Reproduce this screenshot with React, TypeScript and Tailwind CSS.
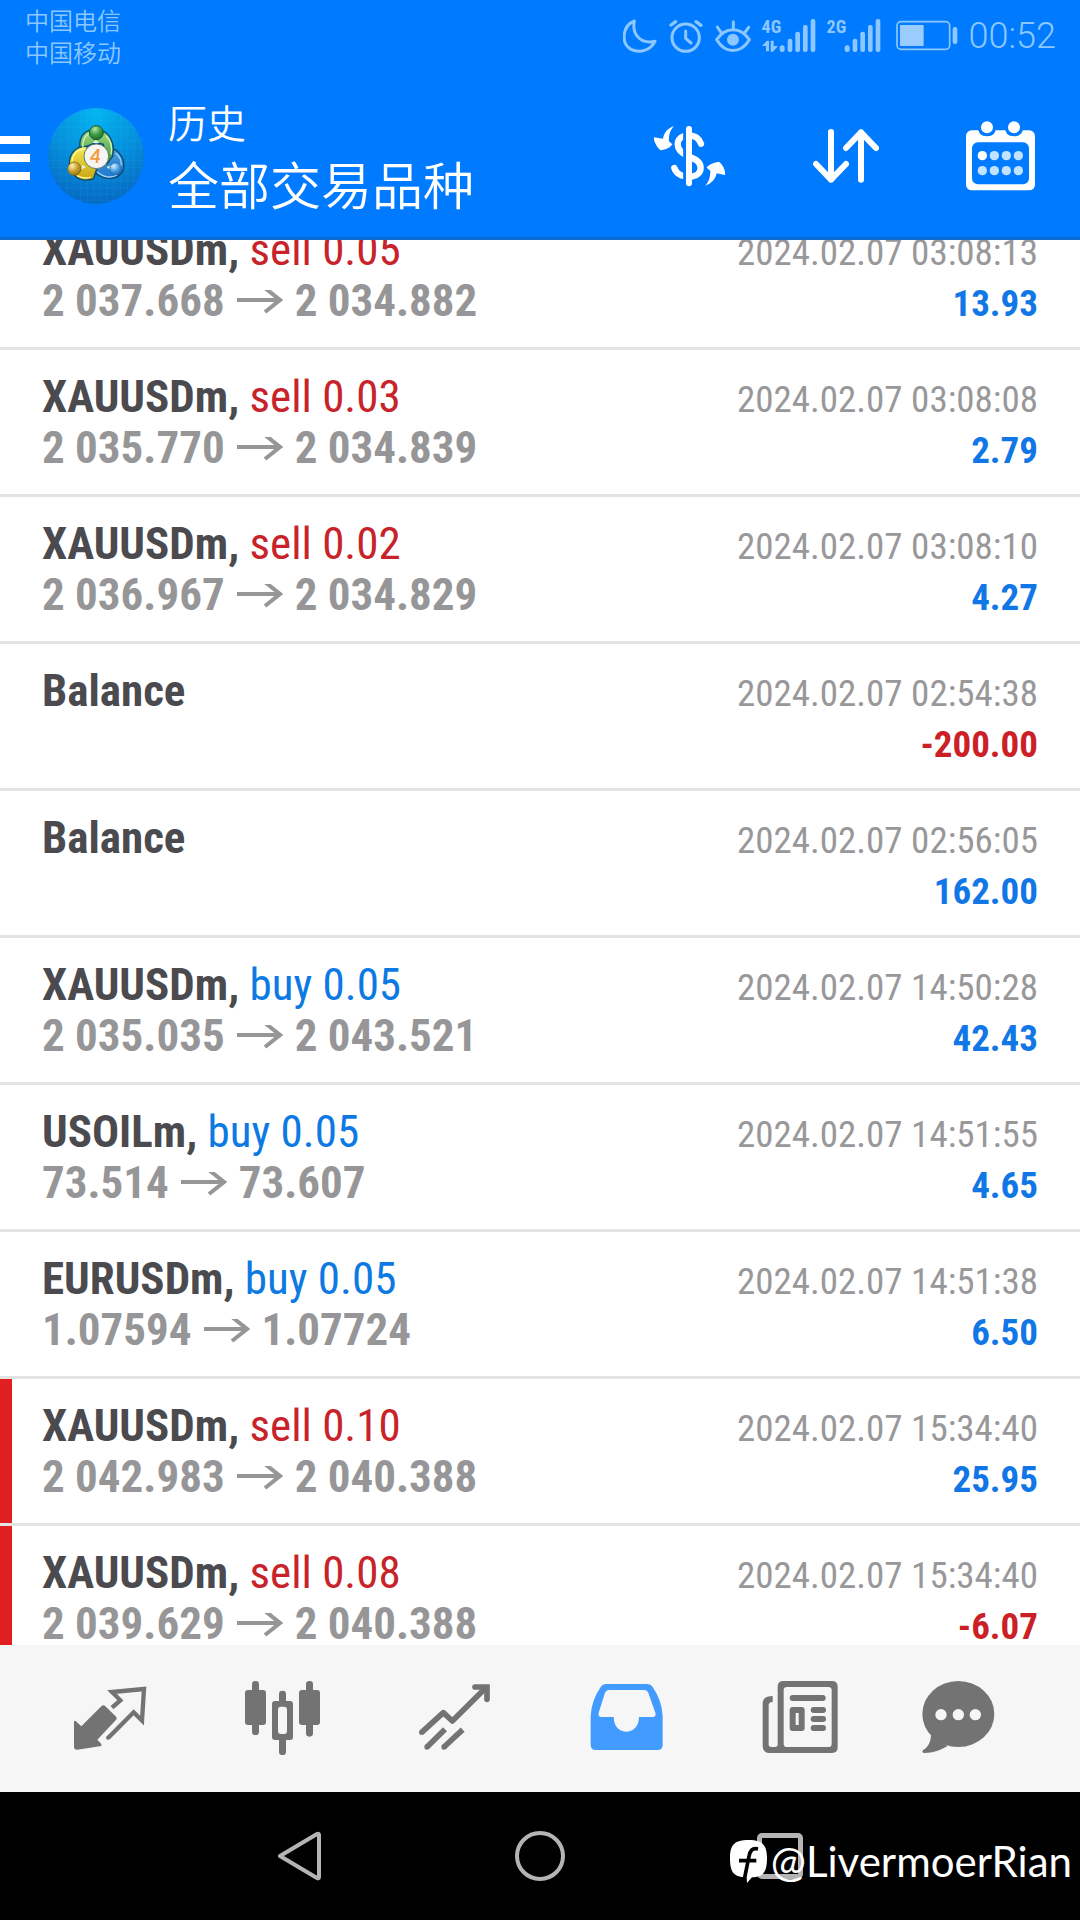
import type { ReactNode } from "react";
import clsx from "clsx";

type Deal = {
  symbol: string;
  side?: "sell" | "buy";
  volume?: string;
  open?: string;
  close?: string;
  time: string;
  profit: string;
  marked?: boolean;
};

const deals: Deal[] = [
  { symbol: "XAUUSDm", side: "sell", volume: "0.05", open: "2 037.668", close: "2 034.882", time: "2024.02.07 03:08:13", profit: "13.93" },
  { symbol: "XAUUSDm", side: "sell", volume: "0.03", open: "2 035.770", close: "2 034.839", time: "2024.02.07 03:08:08", profit: "2.79" },
  { symbol: "XAUUSDm", side: "sell", volume: "0.02", open: "2 036.967", close: "2 034.829", time: "2024.02.07 03:08:10", profit: "4.27" },
  { symbol: "Balance", time: "2024.02.07 02:54:38", profit: "-200.00" },
  { symbol: "Balance", time: "2024.02.07 02:56:05", profit: "162.00" },
  { symbol: "XAUUSDm", side: "buy", volume: "0.05", open: "2 035.035", close: "2 043.521", time: "2024.02.07 14:50:28", profit: "42.43" },
  { symbol: "USOILm", side: "buy", volume: "0.05", open: "73.514", close: "73.607", time: "2024.02.07 14:51:55", profit: "4.65" },
  { symbol: "EURUSDm", side: "buy", volume: "0.05", open: "1.07594", close: "1.07724", time: "2024.02.07 14:51:38", profit: "6.50" },
  { symbol: "XAUUSDm", side: "sell", volume: "0.10", open: "2 042.983", close: "2 040.388", time: "2024.02.07 15:34:40", profit: "25.95", marked: true },
  { symbol: "XAUUSDm", side: "sell", volume: "0.08", open: "2 039.629", close: "2 040.388", time: "2024.02.07 15:34:40", profit: "-6.07", marked: true }
];

function Signal({ label, data = false }: { label: string; data?: boolean }) {
  return (
    <div className="relative h-9 w-[54px]">
      <span className="absolute top-0 left-0 font-['Roboto_Condensed','Roboto',sans-serif] text-[18px] leading-[18px] font-bold">
        {label}
      </span>
      <svg className="block h-9 w-[54px]" viewBox="485 54 162 108" fill="currentColor">
        <rect x="538" y="136" width="15" height="20" rx="7" />
        <rect x="562" y="116" width="14" height="40" rx="6" />
        <rect x="585" y="95" width="14" height="61" rx="6" />
        <rect x="608" y="75" width="14" height="81" rx="6" />
        <rect x="631" y="57" width="14" height="99" rx="6" />
        {data && <path d="M485 138 L500 122 H506 V154 H497 V138Z M511 122 H520 V138 H533 L518 155 H511Z" />}
      </svg>
    </div>
  );
}

function StatusBar() {
  return (
    <div className="flex h-[72px] justify-between pr-6 pl-[25px] text-[#8cc8ff]">
      <div className="pt-1 text-[24px] leading-[32px] font-[350]">
        <p>中国电信</p>
        <p>中国移动</p>
      </div>
      <div className="flex h-[72px] items-center gap-[11px]">
        <svg className="h-9 w-[34px]" viewBox="70 55 102 108" fill="none" stroke="currentColor" strokeWidth="9" strokeLinejoin="round">
          <path d="M104 64 C66 80 64 132 94 149 C122 163 154 150 166 125 C124 134 96 106 104 64Z" />
        </svg>
        <svg className="h-9 w-9" viewBox="203 55 108 108" fill="none" stroke="currentColor" strokeWidth="9" strokeLinecap="round">
          <circle cx="256" cy="114" r="41" />
          <path d="M256 94 V116 L272 130" strokeWidth="9" />
          <path d="M212 76 L226 66 M287 66 L302 77" strokeWidth="10" />
        </svg>
        <svg className="h-9 w-9" viewBox="341 55 108 108" fill="none" stroke="currentColor" strokeWidth="9" strokeLinecap="round">
          <path d="M346 120 C372 80 418 80 444 120 C418 163 372 163 346 120Z" strokeLinejoin="round" />
          <circle cx="395" cy="120" r="18" fill="currentColor" stroke="none" />
          <path d="M396 66 V84 M348 82 L359 98 M442 83 L431 98" />
        </svg>
        <Signal label="4G" data />
        <Signal label="2G" />
        <svg className="ml-1 h-8 w-[62px]" viewBox="886 63 186 96" fill="none" stroke="currentColor">
          <rect x="889" y="68" width="158" height="83" rx="12" strokeWidth="5" />
          <rect x="898" y="78" width="71" height="63" rx="2" fill="#9accff" stroke="none" />
          <rect x="1056" y="84" width="14" height="51" rx="6" fill="currentColor" stroke="none" />
        </svg>
        <span className="font-['Roboto',sans-serif] text-[36px] leading-[38px] font-light">00:52</span>
      </div>
    </div>
  );
}

function AccountLogo() {
  return (
    <svg className="size-24" viewBox="144 323 288 288">
      <defs>
        <radialGradient id="sea" cx="0.5" cy="0.05" r="0.95">
          <stop offset="0" stopColor="#04b4f2" />
          <stop offset="0.5" stopColor="#0590dc" />
          <stop offset="1" stopColor="#0668c2" />
        </radialGradient>
        <linearGradient id="green" x1="0" y1="0" x2="0" y2="1">
          <stop offset="0" stopColor="#a5dc88" />
          <stop offset="1" stopColor="#2f9434" />
        </linearGradient>
        <linearGradient id="yellow" x1="0" y1="0" x2="0" y2="1">
          <stop offset="0" stopColor="#f4ea52" />
          <stop offset="1" stopColor="#c8a312" />
        </linearGradient>
        <linearGradient id="blue" x1="0" y1="0" x2="0" y2="1">
          <stop offset="0" stopColor="#4d9ede" />
          <stop offset="1" stopColor="#1c78cc" />
        </linearGradient>
        <radialGradient id="greenBall" cx="0.4" cy="0.25" r="0.8">
          <stop offset="0" stopColor="#b8e8a0" />
          <stop offset="0.5" stopColor="#3f9c48" />
          <stop offset="1" stopColor="#1a6c2c" />
        </radialGradient>
        <radialGradient id="yellowBall" cx="0.35" cy="0.3" r="0.8">
          <stop offset="0" stopColor="#fff3b0" />
          <stop offset="0.5" stopColor="#c9a234" />
          <stop offset="1" stopColor="#8f6c10" />
        </radialGradient>
        <radialGradient id="blueBall" cx="0.35" cy="0.3" r="0.8">
          <stop offset="0" stopColor="#d8f0ff" />
          <stop offset="0.5" stopColor="#4c9fe0" />
          <stop offset="1" stopColor="#1460ac" />
        </radialGradient>
        <pattern id="mesh" x="0" y="0" width="20" height="20" patternUnits="userSpaceOnUse">
          <path d="M0 0H20M0 0V20" stroke="#2cc0f4" strokeWidth="2" opacity="0.3" />
        </pattern>
      </defs>
      <circle cx="288" cy="467" r="144" fill="url(#sea)" />
      <circle cx="288" cy="467" r="144" fill="url(#mesh)" />
      <g stroke="#0d4a6c" strokeWidth="4">
        <path d="M336 444 C362 452 376 482 370 508 C358 540 304 546 272 504 L322 488Z" fill="url(#blue)" />
        <path d="M240 446 C234 404 260 386 290 388 C326 390 346 424 338 468 L322 490 L310 432 L288 426Z" fill="url(#green)" />
        <path d="M262 438 C226 436 206 462 208 496 C216 532 244 546 280 536 L290 506 L256 478Z" fill="url(#yellow)" />
      </g>
      <path d="M249 442 C246 412 262 398 280 396 M333 462 C338 440 332 420 318 406" fill="none" stroke="#d2f2ba" strokeWidth="4" />
      <path d="M216 484 C218 460 234 446 256 446 M232 526 C246 534 262 534 272 530" fill="none" stroke="#fff9a0" strokeWidth="4" />
      <path d="M346 458 C362 470 366 486 362 500 M292 514 C310 532 336 534 350 524" fill="none" stroke="#9cd4fa" strokeWidth="4" />
      <path d="M278 428 L288 418 L298 428Z M246 494 L244 508 L258 500Z M320 500 L334 494 L330 508Z" fill="#e8f4e0" />
      <circle cx="289" cy="397" r="21" fill="url(#greenBall)" stroke="#175c30" strokeWidth="3" />
      <circle cx="223" cy="505" r="20" fill="url(#yellowBall)" stroke="#7c6010" strokeWidth="2" />
      <circle cx="347" cy="505" r="18" fill="url(#blueBall)" stroke="#1a64a8" strokeWidth="2" />
      <circle cx="289" cy="468" r="37" fill="#f7f5f2" stroke="#5a7a6c" strokeWidth="3" />
      <text x="286" y="489" textAnchor="middle" fontFamily="Lato, sans-serif" fontSize="58" fontWeight="700" fontStyle="italic" fill="#f39a3c">
        4
      </text>
    </svg>
  );
}

function AppBar() {
  return (
    <div className="flex h-[165px] items-center pt-0.5 pr-[45px] text-white">
      <button type="button" aria-label="Menu" className="mt-1 flex w-[30px] flex-col gap-[10px]">
        <span className="h-2 bg-white" />
        <span className="h-2 bg-white" />
        <span className="h-2 bg-white" />
      </button>
      <div className="ml-[18px]">
        <AccountLogo />
      </div>
      <div className="ml-6 grow pb-2 font-[350]">
        <h1 className="text-[39px] leading-[62px]">历史</h1>
        <p className="text-[51px] leading-[62px]">全部交易品种</p>
      </div>
      <div className="flex items-center gap-[87px]">
        <button type="button" aria-label="Filter by symbol">
          <svg className="h-[70px] w-[73px]" viewBox="71 63 219 210" fill="none" stroke="currentColor" strokeLinecap="round">
            <path
              d="M215 131 C208 112 194 106 178 106 C156 106 145 119 145 133 C145 152 160 162 179 170 C204 178 214 188 214 203 C214 221 198 230 179 230 C157 230 141 221 135 204"
              strokeWidth="19"
            />
            <path d="M166 88 V250" stroke="#007aff" strokeWidth="9" />
            <path d="M179 87 V250" strokeWidth="18" />
            <path d="M134 78 C114 86 104 98 101 116 L74 112 C72 122 82 142 94 151 C108 150 124 142 129 133 L119 124 C118 104 123 90 134 78Z" fill="currentColor" stroke="none" />
            <path d="M227 258 C247 250 258 238 262 220 L287 225 C290 212 280 194 270 186 C256 186 238 194 232 203 L243 212 C243 232 238 246 227 258Z" fill="currentColor" stroke="none" />
          </svg>
        </button>
        <button type="button" aria-label="Sort">
          <svg className="h-[54px] w-[66px]" viewBox="549 87 198 162" fill="none" stroke="currentColor" strokeWidth="18" strokeLinecap="round" strokeLinejoin="round">
            <path d="M603 96 V239 M558 192 L603 239 L648 192" />
            <path d="M693 239 V97 M648 144 L693 97 L738 144" />
          </svg>
        </button>
        <button type="button" aria-label="Period">
          <svg className="h-[70px] w-[69px]" viewBox="1008 59 207 210">
            <rect x="1008" y="87" width="207" height="180" rx="17" fill="currentColor" />
            <rect x="1026" y="123" width="171" height="126" rx="18" fill="#007aff" />
            <path d="M1044 78 H1098 Q1098 105 1071 105 Q1044 105 1044 78Z M1125 78 H1179 Q1179 105 1152 105 Q1125 105 1125 78Z" fill="#007aff" />
            <circle cx="1071" cy="78" r="18" fill="currentColor" />
            <circle cx="1152" cy="78" r="18" fill="currentColor" />
            <circle cx="1057" cy="163" r="14" fill="currentColor" />
            <g fill="#c2e3ff">
              <circle cx="1093" cy="163" r="14" />
              <circle cx="1129" cy="163" r="14" />
              <circle cx="1165" cy="163" r="14" />
              <circle cx="1057" cy="208" r="14" />
              <circle cx="1093" cy="208" r="14" />
              <circle cx="1129" cy="208" r="14" />
              <circle cx="1165" cy="208" r="14" />
            </g>
          </svg>
        </button>
      </div>
    </div>
  );
}

function DealRow({ deal }: { deal: Deal }) {
  return (
    <li
      className={clsx(
        "h-[147px] border-b-3 border-[#e3e3e3] px-[42px] pt-[21px] font-['Roboto_Condensed','Roboto',sans-serif] leading-[51px]",
        deal.marked && "bg-linear-to-r from-[#e02020] from-[12px] to-white to-[12px]"
      )}
    >
      <div className="flex h-[51px] items-baseline justify-between">
        <p className="text-[45px] font-bold text-[#4a4a4f]">
          {deal.symbol}
          {deal.side && (
            <>
              {", "}
              <span className={clsx("font-normal", deal.side === "sell" ? "text-[#c8232a]" : "text-[#0d79e2]")}>
                {deal.side} {deal.volume}
              </span>
            </>
          )}
        </p>
        <time className="text-[37px] text-[#98989a]">{deal.time}</time>
      </div>
      <div className="flex h-[51px] items-baseline justify-between font-bold">
        <p className="text-[45px] text-[#969698]">
          {deal.open ? (
            <>
              {deal.open}
              <svg className="mx-3 inline h-[26px] w-[46px] align-baseline" viewBox="0 0 46 26" fill="none" stroke="currentColor" strokeWidth="4">
                <path d="M0 10 H43 M28 -2 L43 10 L28 22" />
              </svg>
              {deal.close}
            </>
          ) : (
            "\u00a0"
          )}
        </p>
        <p className={clsx("text-[37px]", deal.profit.startsWith("-") ? "text-[#cc2027]" : "text-[#1277e6]")}>
          {deal.profit}
        </p>
      </div>
    </li>
  );
}

function Tab({ label, active = false, children }: { label: string; active?: boolean; children: ReactNode }) {
  return (
    <button
      type="button"
      aria-label={label}
      className={clsx("flex items-center justify-center", active ? "text-[#429bff]" : "text-[#737373]")}
    >
      {children}
    </button>
  );
}

function TabBar() {
  return (
    <nav className="grid h-[147px] grid-cols-[repeat(5,172fr)_148fr] bg-[#f6f6f6] pr-12 pl-6">
      <Tab label="Quotes">
        <svg className="size-[75px]" viewBox="99 123 225 225" fill="none" stroke="currentColor">
          <path d="M184 199 Q190 193 196 199 L227 229 Q233 235 227 241 L172 299 L184 312 V318 L112 329 Q102 330 102 320 V243 L107 243 L124 259Z" fill="currentColor" stroke="none" />
          <path d="M216 203 L241 181 L216 156 L312 147 L306 242 L281 217 L205 293" strokeWidth="13" />
          <circle cx="204" cy="293" r="6" fill="currentColor" stroke="none" />
        </svg>
      </Tab>
      <Tab label="Charts">
        <svg className="size-[75px]" viewBox="612 123 225 225" fill="currentColor">
          <rect x="633" y="123" width="21" height="162" rx="10" />
          <rect x="612" y="150" width="63" height="105" rx="9" />
          <rect x="795" y="123" width="21" height="167" rx="10" />
          <rect x="774" y="150" width="63" height="105" rx="9" />
          <rect x="714" y="152" width="21" height="193" rx="10" />
          <rect x="693" y="183" width="63" height="117" rx="9" />
          <rect x="711" y="200" width="27" height="82" rx="9" fill="#f6f6f6" />
        </svg>
      </Tab>
      <Tab label="Trade">
        <svg className="size-[75px]" viewBox="1128 123 225 225" fill="none" stroke="currentColor" strokeWidth="17">
          <path d="M1142 277 L1207 218 L1234 243 L1336 142" strokeLinejoin="round" />
          <path d="M1302 141 H1338 V178" strokeLinecap="round" />
          <path d="M1158 321 L1212 268 M1209 321 L1265 269" />
          <g fill="currentColor" stroke="none">
            <circle cx="1142" cy="277" r="8" />
            <circle cx="1158" cy="321" r="8" />
            <circle cx="1209" cy="321" r="8" />
          </g>
        </svg>
      </Tab>
      <Tab label="History" active>
        <svg className="size-[75px]" viewBox="88 123 225 225" fill="currentColor">
          <path
            fillRule="evenodd"
            d="M138 132 H262 Q273 132 279 141 Q307 182 309 228 V314 Q309 330 293 330 H109 Q93 330 93 314 V228 Q95 182 123 141 Q129 132 138 132Z M148 150 Q139 150 136 158 L117 218 Q114 231 126 231 H162 C162 290 238 290 238 231 H278 Q291 231 287 218 L266 158 Q263 150 254 150Z"
          />
        </svg>
      </Tab>
      <Tab label="News">
        <svg className="size-[75px]" viewBox="604 123 225 225" fill="currentColor" overflow="visible">
          <path
            fillRule="evenodd"
            d="M671 123 H817 Q834 123 834 140 V322 Q834 339 817 339 H631 Q609 339 609 317 V190 Q609 168 639 168 V186 Q627 186 627 196 V313 Q627 321 635 321 H646 Q654 321 654 313 V140 Q654 123 671 123Z M682 141 Q672 141 672 151 V311 Q672 321 682 321 H806 Q816 321 816 311 V151 Q816 141 806 141Z"
          />
          <rect x="690" y="165" width="108" height="18" rx="9" />
          <path fillRule="evenodd" d="M699 201 H726 Q735 201 735 210 V264 Q735 273 726 273 H699 Q690 273 690 264 V210 Q690 201 699 201Z M708 219 V255 H717 V219Z" />
          <rect x="753" y="201" width="46" height="18" rx="9" />
          <rect x="753" y="228" width="46" height="18" rx="9" />
          <rect x="753" y="255" width="46" height="18" rx="9" />
        </svg>
      </Tab>
      <Tab label="Messages">
        <svg className="size-[75px]" viewBox="1082 123 225 225" fill="currentColor">
          <ellipse cx="1194" cy="222" rx="108" ry="99" />
          <path d="M1112 284 C1112 304 1104 322 1088 330 Q1083 338 1092 339 C1120 339 1140 330 1162 318Z" />
          <circle cx="1142" cy="224" r="17" fill="#f6f6f6" />
          <circle cx="1194" cy="224" r="17" fill="#f6f6f6" />
          <circle cx="1245" cy="224" r="17" fill="#f6f6f6" />
        </svg>
      </Tab>
    </nav>
  );
}

function SystemNav() {
  return (
    <div className="relative grid h-32 grid-cols-3 bg-black px-[180px] text-[#b4b4b4]">
      <button type="button" aria-label="Back" className="flex items-center justify-center">
        <svg className="h-[50px] w-11" viewBox="0 0 44 50" fill="none" stroke="currentColor" strokeWidth="4" strokeLinejoin="round">
          <path d="M2 25 L39 3 Q41 2 41 4 V46 Q41 48 39 47Z" />
        </svg>
      </button>
      <button type="button" aria-label="Home" className="flex items-center justify-center">
        <span className="size-[50px] rounded-full border-4 border-current" />
      </button>
      <button type="button" aria-label="Recents" className="flex items-center justify-center">
        <span className="size-[46px] rounded-[5px] border-[5px] border-current" />
      </button>
      <div className="absolute top-[47px] right-2 flex items-center gap-1 text-white">
        <svg className="h-[43px] w-[37px]" viewBox="94 155 111 129">
          <path d="M150 155 C190 155 205 168 205 210 C205 254 192 266 160 267 L145 284 L144 267 C106 266 94 254 94 210 C94 168 108 155 150 155Z" fill="currentColor" />
          <path d="M178 182 C160 178 154 188 151 204 L138 268 M121 217 H173" fill="none" stroke="#000" strokeWidth="11" />
        </svg>
        <span className="font-['Lato',sans-serif] text-[42px] leading-[44px]">@LivermoerRian</span>
      </div>
    </div>
  );
}

export default function App() {
  return (
    <div className="flex h-screen flex-col overflow-hidden bg-white font-['Noto_Sans_CJK_SC',sans-serif]">
      <header className="shrink-0 border-b-3 border-[#0a6bd4] bg-[#007aff]">
        <StatusBar />
        <AppBar />
      </header>
      <main className="min-h-0 grow overflow-hidden">
        <ul className="-mt-[37px]">
          {deals.map((deal, i) => (
            <DealRow key={i} deal={deal} />
          ))}
        </ul>
      </main>
      <footer className="shrink-0">
        <TabBar />
        <SystemNav />
      </footer>
    </div>
  );
}
